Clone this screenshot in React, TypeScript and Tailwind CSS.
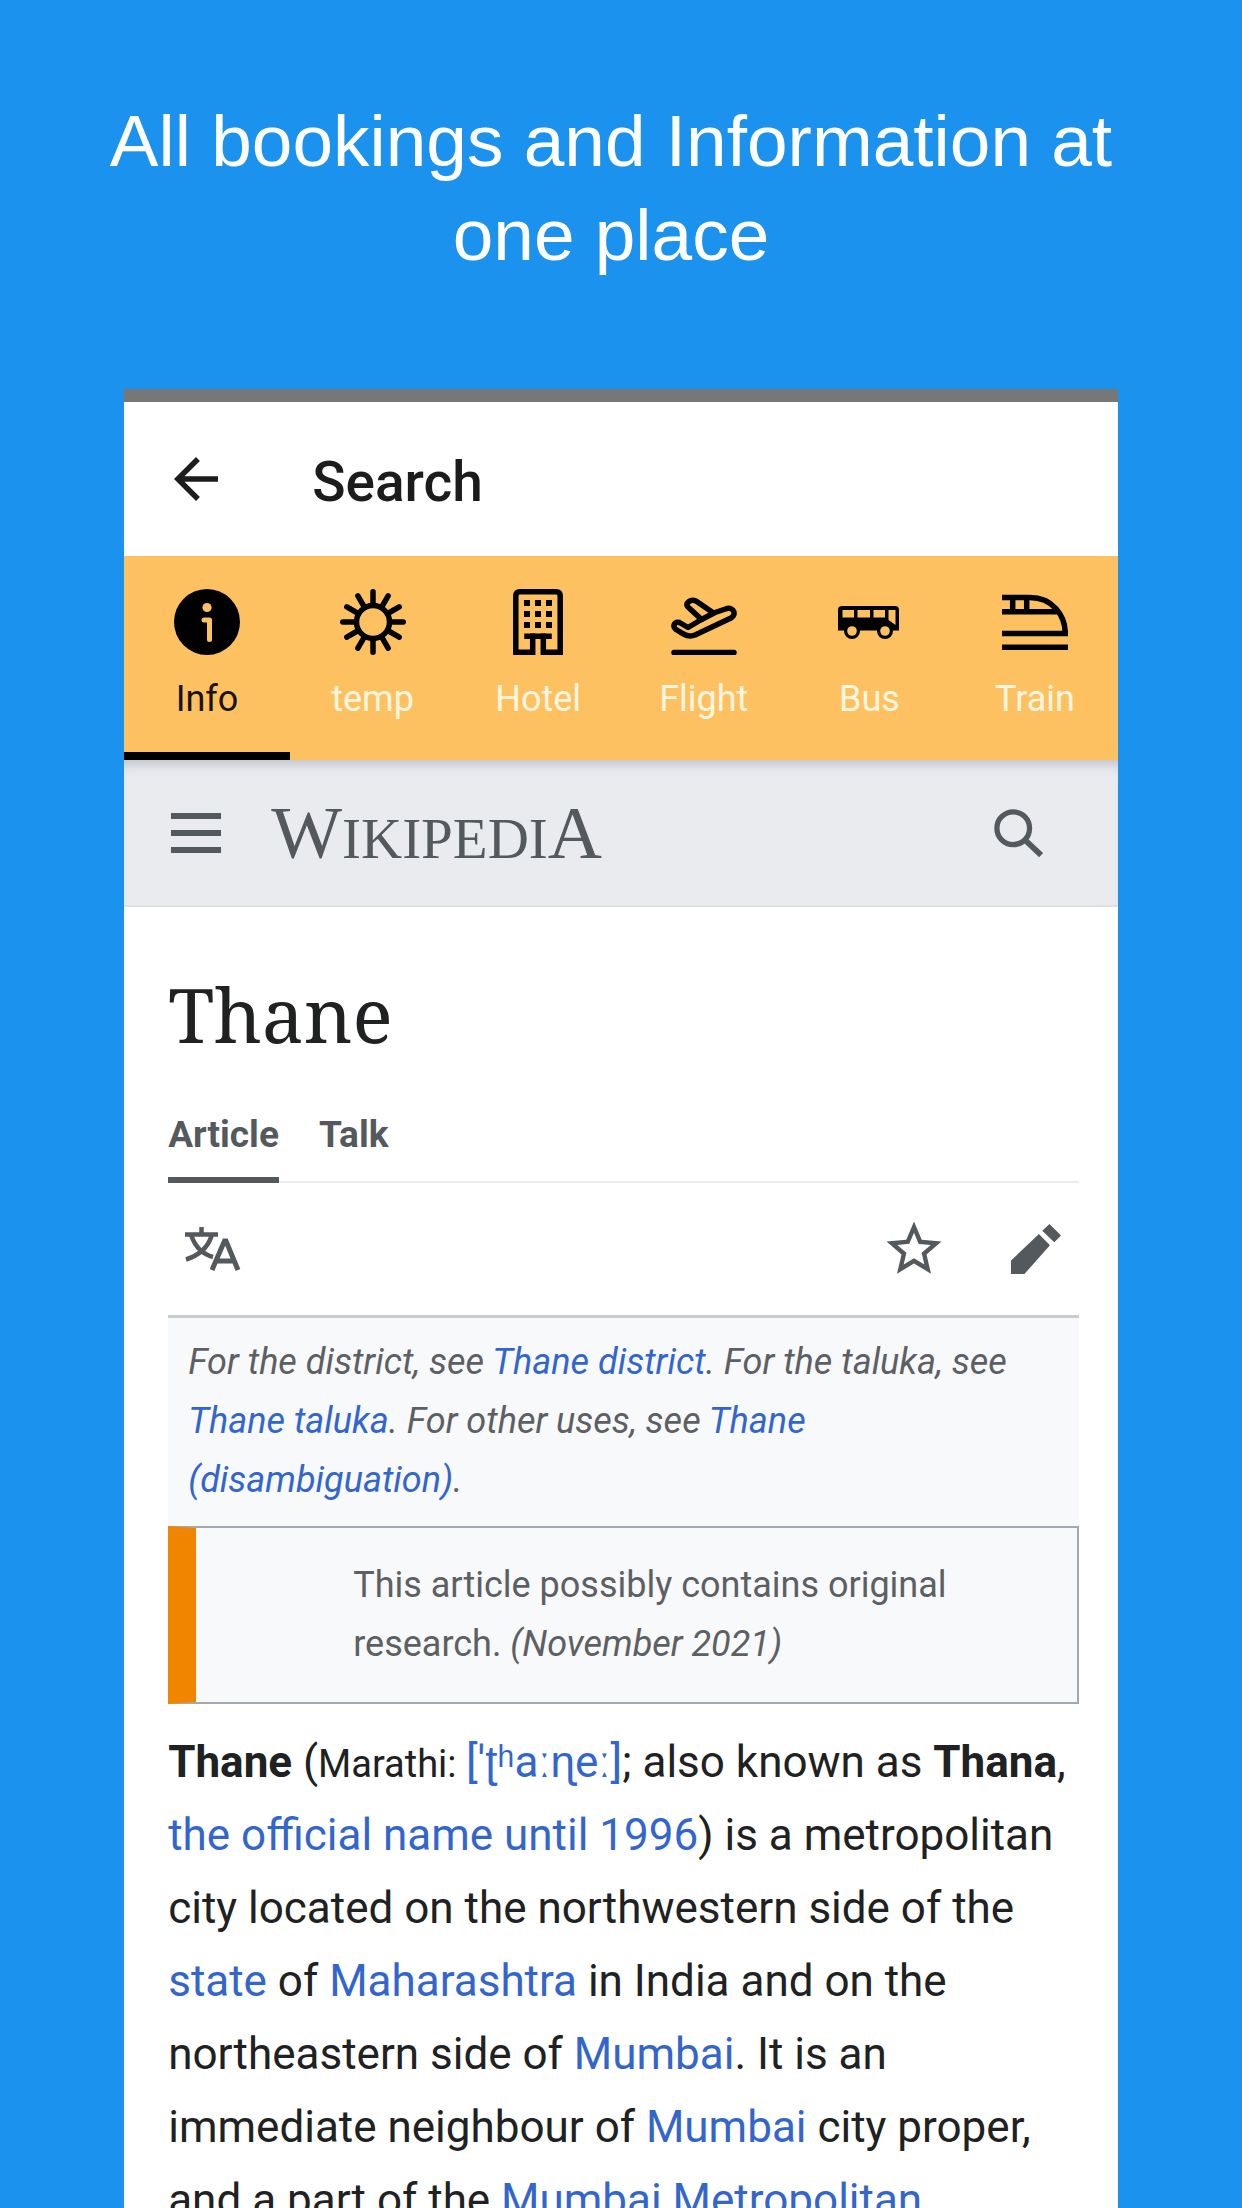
import type { ReactNode } from "react";

const ink = "#54595d";

function InfoIcon() {
  return (
    <svg viewBox="0 0 66 66" className="size-[66px]" aria-hidden="true">
      <circle cx="33" cy="33" r="33" fill="#000" />
      <circle cx="33" cy="18.5" r="4.6" fill="#fdc161" />
      <path d="M30 31h5.5v19.5" fill="none" stroke="#fdc161" strokeWidth="5" strokeLinecap="round" strokeLinejoin="round" />
    </svg>
  );
}

function SunIcon() {
  const rays = Array.from({ length: 12 }, (_, i) => i * 30);
  return (
    <svg viewBox="0 0 66 66" className="size-[66px]" fill="none" stroke="#000" strokeWidth="5.5" aria-hidden="true">
      <circle cx="33" cy="33" r="16.5" />
      {rays.map((a) => (
        <path key={a} d="M33 16V2.75" strokeLinecap="round" transform={`rotate(${a} 33 33)`} />
      ))}
    </svg>
  );
}

function HotelIcon() {
  return (
    <svg viewBox="0 0 66 66" className="size-[66px]" aria-hidden="true">
      <path
        d="M22 47.2h22M27.7 47v16.3H10.8V7q0-4.2 4.2-4.2h36q4.2 0 4.2 4.2v56.3H38.3V47"
        fill="none"
        stroke="#000"
        strokeWidth="5.5"
        strokeLinecap="square"
      />
      {[14, 25, 36].map((y) => [22, 33, 44].map((x) => <rect key={`${x}-${y}`} x={x - 3} y={y - 3} width="6" height="6" />))}
    </svg>
  );
}

function FlightIcon() {
  return (
    <svg viewBox="0 0 66 66" className="size-[66px]" fill="none" stroke="#000" strokeWidth="5.5" strokeLinecap="round" strokeLinejoin="round" aria-hidden="true">
      <path d="M3 63.6h60" />
      <path d="M17 38.5L30.5 30.5L16.5 17.5C14.5 14 19.5 9.5 25 12L42.5 24L56 19.5C62.5 18 66 25.5 60 29L24 46C19 48 16 47 12.5 45L5 40.5C1 37.5 3.5 32 8.5 33.5Z" />
      <path d="M30.5 30.5L43 24" />
    </svg>
  );
}

function BusIcon() {
  return (
    <svg viewBox="0 0 66 66" className="size-[66px]" aria-hidden="true">
      <path d="M6 17h53q4 0 4 4v20.5H2V21q0-4 4-4z" />
      <path d="M6.5 21H18v7.5H6.5zM21.5 21H34v7.5H21.5zM37.5 21H49v7.5H37.5zM52.5 21H59.5V36L52.5 31z" fill="#fdc161" />
      <circle cx="16" cy="42" r="8" />
      <circle cx="49" cy="42" r="8" />
      <circle cx="16" cy="42" r="4.8" fill="#fdc161" />
      <circle cx="49" cy="42" r="4.8" fill="#fdc161" />
    </svg>
  );
}

function TrainIcon() {
  return (
    <svg viewBox="0 0 66 66" className="size-[66px]" fill="none" stroke="#000" strokeWidth="5.5" aria-hidden="true">
      <path d="M0 8.5H28C50 8.5 63.3 26 63.3 44.5H0M0 58.2H66M0 22.7H56M10.7 8.5V22.7M24.7 8.5V22.7" />
    </svg>
  );
}

const tabs: { label: string; icon: ReactNode }[] = [
  { label: "Info", icon: <InfoIcon /> },
  { label: "temp", icon: <SunIcon /> },
  { label: "Hotel", icon: <HotelIcon /> },
  { label: "Flight", icon: <FlightIcon /> },
  { label: "Bus", icon: <BusIcon /> },
  { label: "Train", icon: <TrainIcon /> },
];

function A({ children }: { children: ReactNode }) {
  return (
    <a href="#" className="text-[#3366cc]">
      {children}
    </a>
  );
}

function AppBar() {
  return (
    <header className="flex h-[154px] items-center gap-[83px] bg-white pl-[39px] text-[#1c1c1c]">
      <button type="button" aria-label="Back">
        <svg viewBox="0 0 24 24" className="size-[66px]" fill="currentColor" aria-hidden="true">
          <path d="M20 11H7.83l5.59-5.59L12 4l-8 8 8 8 1.41-1.41L7.83 13H20v-2z" />
        </svg>
      </button>
      <h2 className="pt-1.5 text-[55px] leading-[64px] font-medium">Search</h2>
    </header>
  );
}

function CategoryTabs() {
  return (
    <nav className="grid h-[204px] grid-cols-6 bg-[#fdc161]" aria-label="Categories">
      {tabs.map((tab, i) => (
        <button
          key={tab.label}
          type="button"
          className={
            i === 0
              ? "flex flex-col items-center gap-[22px] border-b-8 border-black pt-[33px] text-[36px] leading-[44px] text-[#1a1204]"
              : "flex flex-col items-center gap-[22px] border-b-8 border-transparent pt-[33px] text-[36px] leading-[44px] text-[#fff6e0]"
          }
        >
          {tab.icon}
          <span>{tab.label}</span>
        </button>
      ))}
    </nav>
  );
}

function WikiBar() {
  return (
    <div className="flex h-[147px] items-center border-b-2 border-[#dfe0e3] bg-[#eaebef] pr-[74px] pl-[47px] shadow-[inset_0_12px_12px_-8px_rgba(90,90,110,0.3)]">
      <button type="button" aria-label="Menu" className="flex w-[50px] flex-col gap-[11px]">
        <span className="h-1.5 bg-[#54595d]" />
        <span className="h-1.5 bg-[#54595d]" />
        <span className="h-1.5 bg-[#54595d]" />
      </button>
      <a href="#" className="ml-[50px] pt-1.5 font-['Liberation_Serif',serif] text-[75px] leading-[84px] text-[#54595d]">
        W<span className="text-[57px]">IKIPEDI</span>A
      </a>
      <button type="button" aria-label="Search Wikipedia" className="ml-auto pt-0.5">
        <svg viewBox="0 0 52 52" className="size-[50px]" fill="none" stroke={ink} strokeWidth="5.5" aria-hidden="true">
          <circle cx="20" cy="20" r="17" />
          <path d="M32 32L49 48" strokeWidth="6" />
        </svg>
      </button>
    </div>
  );
}

function Article() {
  return (
    <article className="bg-white pt-[62px] pr-[39px] pl-[44px]">
      <h1 className="font-['Noto_Serif','DejaVu_Serif_Condensed','DejaVu_Serif',serif] text-[75px] leading-[90px] text-[#202122]">Thane</h1>
      <div className="mt-[52px] flex gap-10 border-b-2 border-[#eaecf0] text-[37px] leading-[48px] font-bold text-[#54595d]">
        <a href="#" className="-mb-0.5 border-b-6 border-[#54595d] pb-[18px]">
          Article
        </a>
        <a href="#">Talk</a>
      </div>
      <div className="flex h-[135px] items-center border-b-3 border-[#c8ccd1] pr-[18px] pl-3">
        <button type="button" aria-label="Language">
          <svg viewBox="0 0 66 66" className="size-[66px]" fill="none" stroke={ink} strokeWidth="4.5" aria-hidden="true">
            <path d="M5 18.5H38M21.5 11V18M11.500 20C15 30 22 38 33 41M31.5 20C28 31 20 39 6 43.5" />
            <path d="M32 54L44.5 25H46L58 54M36 45H54" strokeWidth="5" />
          </svg>
        </button>
        <button type="button" aria-label="Watch" className="ml-auto">
          <svg viewBox="0 0 24 24" className="size-[66px]" fill={ink} aria-hidden="true">
            <path d="M22 9.24l-7.19-.62L12 2 9.19 8.63 2 9.24l5.46 4.73L5.82 21 12 17.27 18.18 21l-1.63-7.03L22 9.24zM12 15.4l-3.76 2.27 1-4.28-3.32-2.88 4.38-.38L12 6.1l1.71 4.04 4.38.38-3.32 2.88 1 4.28L12 15.4z" />
          </svg>
        </button>
        <button type="button" aria-label="Edit" className="ml-[64px]">
          <svg viewBox="0 0 52 52" className="size-[50px]" fill={ink} aria-hidden="true">
            <path d="M0 52V38L29 10.5L40.5 22L14 52zM32.5 7L40 0L52 12L45 19z" />
          </svg>
        </button>
      </div>
      <p className="bg-[#f8f9fa] px-5 pt-[15px] pb-4 text-[36px] leading-[59px] text-[#5c6064] italic">
        For the district, see <A>Thane district</A>. For the taluka, see <A>Thane taluka</A>. For other uses, see <A>Thane (disambiguation)</A>.
      </p>
      <div className="flex border-2 border-l-28 border-[#a2a9b1] border-l-[#f28500] bg-[#f8f9fa] py-[28px] pr-[100px] pl-[157px] text-[36px] leading-[59px] text-[#5c6064]">
        <p>
          This article possibly contains original research. <i>(November 2021)</i>
        </p>
      </div>
      <p className="mt-[22px] text-[44px] leading-[73px] text-[#202122]">
        <b>Thane</b> (<small className="text-[38px] leading-none">Marathi: </small>
        <A>['ʈʰaːɳeː]</A>; also known as <b>Thana</b>, <A>the official name until 1996</A>) is a metropolitan city located on the northwestern side of the{" "}
        <A>state</A> of <A>Maharashtra</A> in India and on the northeastern side of <A>Mumbai</A>. It is an immediate neighbour of <A>Mumbai</A> city proper,
        and a part of the <A>Mumbai Metropolitan</A>
      </p>
    </article>
  );
}

export default function App() {
  return (
    <main className="flex h-screen flex-col overflow-hidden bg-[#1c92ef] px-[10%] font-['Roboto',sans-serif]">
      <p className="-mx-6 mb-[107px] pt-[94px] pr-5 text-center font-['Liberation_Sans',sans-serif] text-[73px] leading-[94px] text-white">
        All bookings and Information at one place
      </p>
      <section className="border-t-13 border-[#777777] bg-white">
        <AppBar />
        <CategoryTabs />
        <WikiBar />
        <Article />
      </section>
    </main>
  );
}
